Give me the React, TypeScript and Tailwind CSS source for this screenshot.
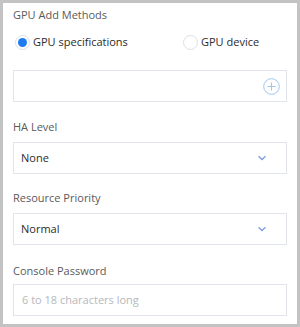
import { useState } from "react";

const font = { fontFamily: '"Open Sans", "Noto Sans", Arial, sans-serif' };

function Chevron() {
  return (
    <svg width="10" height="6" viewBox="0 0 10 6" className="shrink-0">
      <path d="M1.5 1.2 L5 4.5 L8.5 1.2" fill="none" stroke="#7d9fdc" strokeWidth="1.3" />
    </svg>
  );
}

function Radio({ checked, label, onClick }: { checked: boolean; label: string; onClick: () => void }) {
  return (
    <button onClick={onClick} className="flex items-center gap-[3px] h-5">
      <span className="w-[15px] h-[15px] rounded-full border border-[#dcdfe6] flex items-center justify-center bg-white">
        {checked && <span className="w-[9px] h-[9px] rounded-full bg-[#1f7cf0]" />}
      </span>
      <span className="text-[11px] text-[#2b2b2b]">{label}</span>
    </button>
  );
}

function Select({ value }: { value: string }) {
  return (
    <div className="h-8 border border-[#e1e4ea] flex items-center justify-between pl-[7px] pr-[19px]">
      <span className="text-[11px] text-[#2b2b2b]">{value}</span>
      <Chevron />
    </div>
  );
}

export default function App() {
  const [method, setMethod] = useState("spec");

  return (
    <div className="w-[300px] h-[327px] bg-[#c3c3c3] p-[3px]" style={font}>
      <div className="h-full bg-white px-[10px] pt-[2px]">
        <div className="h-5 leading-5 text-[11px] text-[#5a5a5a]">GPU Add Methods</div>

        <div className="mt-[7px] flex items-center pl-[2px]">
          <div className="w-[168px]">
            <Radio checked={method === "spec"} label="GPU specifications" onClick={() => setMethod("spec")} />
          </div>
          <Radio checked={method === "device"} label="GPU device" onClick={() => setMethod("device")} />
        </div>

        <div className="mt-[18px] h-8 border border-[#e1e4ea] flex items-center justify-end pr-[6px]">
          <svg width="17" height="17" viewBox="0 0 17 17">
            <circle cx="8.5" cy="8.5" r="7.8" fill="none" stroke="#9cc6f5" strokeWidth="1" />
            <path d="M8.5 4.5 V12.5 M4.5 8.5 H12.5" stroke="#9cc6f5" strokeWidth="1" />
          </svg>
        </div>

        <div className="mt-[15px] h-5 leading-5 text-[11px] text-[#5a5a5a]">HA Level</div>
        <div className="mt-[5px]">
          <Select value="None" />
        </div>

        <div className="mt-[14px] h-5 leading-5 text-[11px] text-[#5a5a5a]">Resource Priority</div>
        <div className="mt-[5px]">
          <Select value="Normal" />
        </div>

        <div className="mt-[16px] h-5 leading-5 text-[11px] text-[#5a5a5a]">Console Password</div>
        <div className="mt-[3px] h-8 border border-[#e1e4ea] flex items-center pl-[8px]">
          <span className="text-[11px] text-[#b5b8be]">6 to 18 characters long</span>
        </div>
      </div>
    </div>
  );
}
